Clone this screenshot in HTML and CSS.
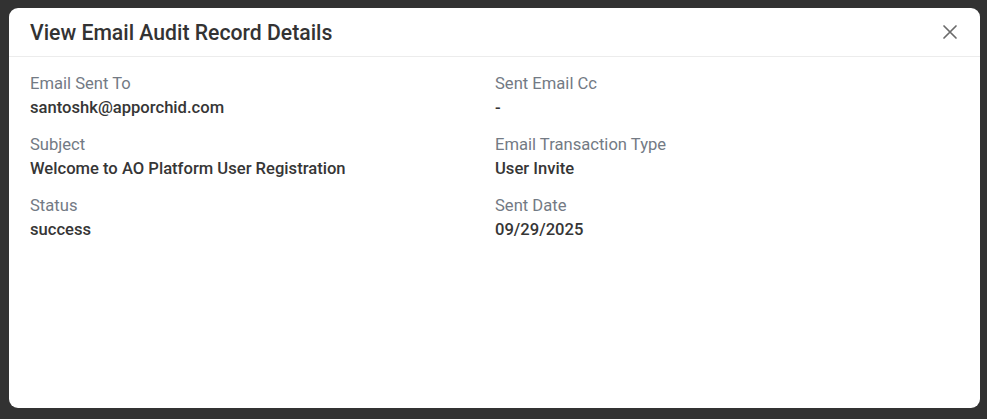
FILE: index.html
```html
<!DOCTYPE html>
<html lang="en">

<head>
    <meta charset="UTF-8">
    <meta name="viewport" content="width=device-width, initial-scale=1.0">
    <title>View Email Audit Record Details</title>
    <link rel="stylesheet" href="styles.css">
</head>

<body>
    <div class="modal">
        <!-- 标题栏 -->
        <div class="modal-header">
            <h2 class="modal-title">View Email Audit Record Details</h2>
            <a href="javascript:;" class="close" aria-label="Close">
                <svg width="16" height="16" viewBox="0 0 16 16">
                    <path d="M2 2 L14 14 M14 2 L2 14" stroke="#6b6b6b" stroke-width="1.7" fill="none" stroke-linecap="round"/>
                </svg>
            </a>
        </div>
        <!-- 详情 -->
        <div class="modal-body">
            <div class="field">
                <div class="label">Email Sent To</div>
                <div class="value">santoshk@apporchid.com</div>
            </div>
            <div class="field">
                <div class="label">Sent Email Cc</div>
                <div class="value">-</div>
            </div>
            <div class="field">
                <div class="label">Subject</div>
                <div class="value">Welcome to AO Platform User Registration</div>
            </div>
            <div class="field">
                <div class="label">Email Transaction Type</div>
                <div class="value">User Invite</div>
            </div>
            <div class="field">
                <div class="label">Status</div>
                <div class="value">success</div>
            </div>
            <div class="field">
                <div class="label">Sent Date</div>
                <div class="value">09/29/2025</div>
            </div>
        </div>
    </div>
</body>

</html>
```

FILE: styles.css
```css
* {
    box-sizing: border-box;
}

body {
    margin: 0;
    padding: 8px 7px 11px 9px;
    height: 419px;
    background-color: #323232;
    font-family: Roboto, "Liberation Sans", sans-serif;
}

.modal {
    height: 400px;
    background-color: #fff;
    border-radius: 9px;
}

.modal-header {
    display: flex;
    align-items: center;
    justify-content: space-between;
    height: 49px;
    padding: 0 22px 0 21px;
    border-bottom: 1px solid #ececec;
}

.modal-title {
    margin: 0;
    font-size: 21.2px;
    font-weight: 500;
    color: #333;
}

.close {
    display: flex;
    /*鼠标经过显示小手*/
    cursor: pointer;
}

.modal-body {
    display: grid;
    grid-template-columns: 465px 1fr;
    row-gap: 13px;
    padding: 15px 21px 0;
}

.label,
.value {
    font-size: 16.6px;
    line-height: 24px;
}

.label {
    color: #737a84;
}

.value {
    color: #363636;
    font-weight: 500;
}
```
